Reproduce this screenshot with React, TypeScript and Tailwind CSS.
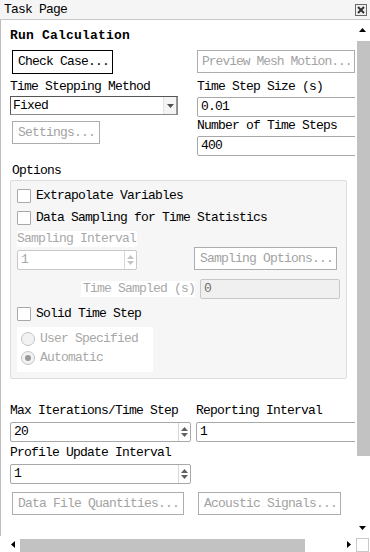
import React from 'react';

const mono = { fontFamily: '"Liberation Mono", "DejaVu Sans Mono", monospace' };

// Small widgets used across the task page
const Btn: React.FC<{ label: string; width: string; disabled?: boolean; tight?: boolean }> = ({
  label,
  width,
  disabled,
  tight,
}) => (
  <div
    className={`h-[23px] flex items-center border shrink-0 whitespace-nowrap border-[#adadad] text-[#a3a3a3] ${width} ${
      tight ? 'pl-[4px] tracking-[-1px]' : 'pl-[5px]'
    } ${disabled ? 'bg-white' : ''}`}
  >
    {label}
  </div>
);

const TextBox: React.FC<{ value: string; width: string; disabled?: boolean }> = ({ value, width, disabled }) => (
  <div
    className={`h-[20px] flex items-center pl-[3px] border rounded-[2px] shrink-0 ${width} ${
      disabled ? 'bg-[#f0f0f0] border-[#c8c8c8] text-[#6d6d6d]' : 'bg-white border-[#a8a8a8] text-black'
    }`}
  >
    {value}
  </div>
);

const SpinArrows: React.FC<{ faded?: boolean }> = ({ faded }) => (
  <div className="w-[12px] h-full flex flex-col items-center justify-center gap-[2px] border-l border-[#d8d8d8]">
    <svg width="7" height="4" viewBox="0 0 7 4">
      <path d="M0 4 L3.5 0 L7 4 Z" fill={faded ? '#c4c4c4' : '#606060'} />
    </svg>
    <svg width="7" height="4" viewBox="0 0 7 4">
      <path d="M0 0 L3.5 4 L7 0 Z" fill={faded ? '#c4c4c4' : '#606060'} />
    </svg>
  </div>
);

const Spinner: React.FC<{ value: string; width: string; disabled?: boolean }> = ({ value, width, disabled }) => (
  <div
    className={`h-[20px] flex items-stretch border rounded-[2px] shrink-0 ${width} ${
      disabled ? 'border-[#c8c8c8] text-[#a8a8a8] bg-white' : 'border-[#a8a8a8] text-black bg-white'
    }`}
  >
    <div className="flex-1 flex items-center pl-[3px]">{value}</div>
    <SpinArrows faded={disabled} />
  </div>
);

const Check: React.FC<{ label: string }> = ({ label }) => (
  <div className="flex items-center gap-[5px] h-[16px]">
    <div className="w-[14px] h-[14px] border border-[#a9a9a9] bg-white rounded-[1px]" />
    <span>{label}</span>
  </div>
);

const Radio: React.FC<{ label: string; on?: boolean }> = ({ label, on }) => (
  <div className="flex items-center gap-[5px] h-[19px] text-[#a8a8a8]">
    <div className="w-[14px] h-[14px] rounded-full border border-[#c4c4c4] bg-[#f2f2f2] flex items-center justify-center">
      {on && <div className="w-[6px] h-[6px] rounded-full bg-[#9a9a9a]" />}
    </div>
    <span>{label}</span>
  </div>
);

export default function App() {
  return (
    <div
      className="w-[370px] h-[552px] overflow-hidden bg-white text-[13px] leading-[16px] tracking-[-0.8px] text-black flex flex-col"
      style={mono}
    >
      {/* Title bar */}
      <div className="h-[20px] shrink-0 flex items-center justify-between pl-[4px] pr-[3px] bg-[#f5f5f5] border-b border-[#c9c9c9]">
        <span>Task Page</span>
        <svg width="12" height="12" viewBox="0 0 12 12">
          <rect x="0.5" y="0.5" width="11" height="11" fill="#f0f0f0" stroke="#6a6a6a" />
          <path d="M3 3 L9 9 M9 3 L3 9" stroke="#333" strokeWidth="2" />
        </svg>
      </div>

      <div className="flex-1 flex min-h-0">
        {/* Page content */}
        <div className="flex-1 min-w-0 overflow-hidden border-l border-[#bdbdbd] pl-[9px] pt-[8px]">
          <div className="w-[400px]">
            <div className="font-bold tracking-[0.2px]">Run Calculation</div>

            <div className="flex mt-[6px]">
              <div className="w-[187px] pl-[2px]">
                <div className="h-[24px] w-[101px] border border-black flex items-center pl-[5px]">Check Case...</div>
              </div>
              <Btn label="Preview Mesh Motion..." width="w-[158px]" disabled tight />
            </div>

            <div className="flex mt-[5px]">
              <div className="w-[187px] flex flex-col">
                <div>Time Stepping Method</div>
                <div className="mt-[1px] h-[19px] w-[168px] flex border border-[#8a8a8a] border-t-[#555] border-l-[#555]">
                  <div className="flex-1 flex items-center pl-[2px]">Fixed</div>
                  <div className="w-[14px] flex items-center justify-center bg-[#f4f4f4] border-l border-[#e0e0e0] border-r border-r-[#9a9a9a]">
                    <svg width="7" height="4" viewBox="0 0 7 4">
                      <path d="M0 0 L3.5 4 L7 0 Z" fill="#505050" />
                    </svg>
                  </div>
                </div>
                <div className="mt-[6px] pl-[2px]">
                  <Btn label="Settings..." width="w-[88px]" disabled />
                </div>
              </div>
              <div className="flex flex-col">
                <div>Time Step Size (s)</div>
                <div className="mt-[2px]">
                  <TextBox value="0.01" width="w-[190px]" />
                </div>
                <div className="mt-[1px]">Number of Time Steps</div>
                <div className="mt-[2px]">
                  <TextBox value="400" width="w-[190px]" />
                </div>
              </div>
            </div>

            <div className="mt-[7px] pl-[2px]">Options</div>
            <div className="mt-[1px] w-[337px] border border-[#dcdcdc] rounded-[2px] bg-[#f6f6f6] pl-[6px] pt-[7px] pb-[6px]">
              <Check label="Extrapolate Variables" />
              <div className="mt-[6px]">
                <Check label="Data Sampling for Time Statistics" />
              </div>
              <div className="mt-[5px] flex items-start">
                <div className="w-[177px] flex flex-col">
                  <div className="bg-white w-[120px] text-[#a8a8a8] h-[16px] flex items-center">Sampling Interval</div>
                  <div className="mt-[3px]">
                    <Spinner value="1" width="w-[120px]" disabled />
                  </div>
                </div>
                <div className="mt-[16px]">
                  <Btn label="Sampling Options..." width="w-[143px]" disabled />
                </div>
              </div>
              <div className="mt-[9px] flex items-center">
                <div className="w-[183px] flex justify-end pr-[5px]">
                  <span className="bg-white text-[#a8a8a8] pl-[2px]">Time Sampled (s)</span>
                </div>
                <TextBox value="0" width="w-[140px]" disabled />
              </div>
              <div className="mt-[7px]">
                <Check label="Solid Time Step" />
              </div>
              <div className="mt-[5px] w-[136px] bg-white pl-[4px] pt-[2px] pb-[5px]">
                <Radio label="User Specified" />
                <Radio label="Automatic" on />
              </div>
            </div>

            <div className="flex mt-[24px]">
              <div className="w-[186px] flex flex-col">
                <div>Max Iterations/Time Step</div>
                <div className="mt-[3px]">
                  <Spinner value="20" width="w-[181px]" />
                </div>
                <div className="mt-[3px]">Profile Update Interval</div>
                <div className="mt-[3px]">
                  <Spinner value="1" width="w-[181px]" />
                </div>
              </div>
              <div className="flex flex-col">
                <div>Reporting Interval</div>
                <div className="mt-[3px]">
                  <TextBox value="1" width="w-[190px]" />
                </div>
              </div>
            </div>

            <div className="flex mt-[8px]">
              <div className="w-[188px] pl-[2px]">
                <Btn label="Data File Quantities..." width="w-[172px]" disabled />
              </div>
              <Btn label="Acoustic Signals..." width="w-[143px]" disabled />
            </div>
          </div>
        </div>

        {/* Vertical scrollbar */}
        <div className="w-[15px] shrink-0 flex flex-col items-center pt-[8px] pb-[6px]">
          <svg width="7" height="4" viewBox="0 0 7 4">
            <path d="M0 4 L3.5 0 L7 4 Z" fill="#000" />
          </svg>
          <div className="mt-[9px] w-[13px] h-[415px] bg-[#c2c2c2] self-end" />
          <div className="flex-1" />
          <svg width="7" height="4" viewBox="0 0 7 4">
            <path d="M0 0 L3.5 4 L7 0 Z" fill="#000" />
          </svg>
        </div>
      </div>

      {/* Horizontal scrollbar */}
      <div className="h-[16px] shrink-0 flex items-center">
        <div className="flex-1 flex items-center h-full pl-[11px] pr-[5px]">
          <svg width="4" height="7" viewBox="0 0 4 7">
            <path d="M4 0 L0 3.5 L4 7 Z" fill="#000" />
          </svg>
          <div className="ml-[5px] w-[285px] h-[13px] self-end bg-[#c2c2c2]" />
          <div className="flex-1" />
          <svg width="4" height="7" viewBox="0 0 4 7">
            <path d="M0 0 L4 3.5 L0 7 Z" fill="#000" />
          </svg>
        </div>
        <div className="w-[13px] h-[14px] mr-[1px] self-end border border-[#c9c9c9] bg-white" />
      </div>
    </div>
  );
}
